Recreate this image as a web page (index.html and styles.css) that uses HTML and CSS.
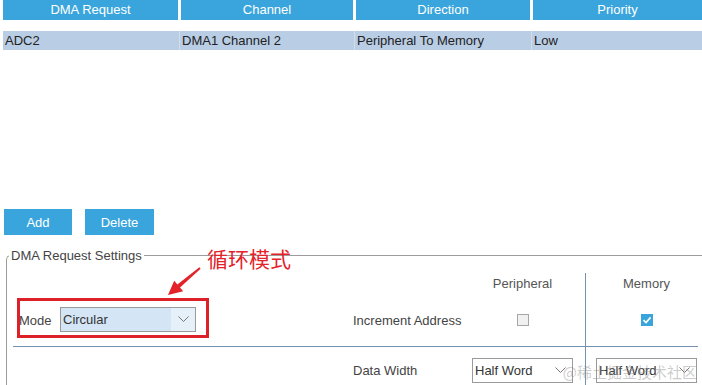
FILE: index.html
```html
<!DOCTYPE html>
<html lang="en">
<head>
    <meta charset="UTF-8">
    <title>DMA Settings</title>
    <link rel="stylesheet" href="styles.css">
</head>
<body>
    <div class="dma-table">
        <div class="dma-row head">
            <div>DMA Request</div>
            <div>Channel</div>
            <div>Direction</div>
            <div>Priority</div>
        </div>
        <div class="dma-row selected">
            <div>ADC2</div>
            <div>DMA1 Channel 2</div>
            <div>Peripheral To Memory</div>
            <div>Low</div>
        </div>
    </div>

    <div class="actions">
        <button class="btn btn-add">Add</button>
        <button class="btn btn-delete">Delete</button>
    </div>

    <fieldset class="settings">
        <legend>DMA Request Settings</legend>
        <div class="settings-grid">
            <div class="cell"></div>
            <div class="cell"></div>
            <div class="cell col-head">Peripheral</div>
            <div class="cell col-head mem">Memory</div>

            <div class="cell mode-cell line">
                <span class="mode-label">Mode</span>
                <div class="select mode-select">
                    <span>Circular</span>
                    <span class="select-btn">
                        <svg width="11" height="7" viewBox="0 0 11 7"><polyline points="0.5,0.5 5.5,5.5 10.5,0.5" fill="none" stroke="#777" stroke-width="1"/></svg>
                    </span>
                </div>
            </div>
            <div class="cell line nowrap">Increment Address</div>
            <div class="cell center line"><span class="check"></span></div>
            <div class="cell center line mem">
                <span class="check on">
                    <svg width="12" height="12" viewBox="0 0 12 12"><polyline points="2.5,6.2 5,8.6 9.6,3.4" fill="none" stroke="#fff" stroke-width="1.6"/></svg>
                </span>
            </div>

            <div class="cell"></div>
            <div class="cell nowrap">Data Width</div>
            <div class="cell center">
                <div class="select small">
                    <span>Half Word</span>
                    <svg width="11" height="7" viewBox="0 0 11 7"><polyline points="0.5,0.5 5.5,5.5 10.5,0.5" fill="none" stroke="#777" stroke-width="1"/></svg>
                </div>
            </div>
            <div class="cell center mem">
                <div class="select small">
                    <span>Half Word</span>
                    <svg width="11" height="7" viewBox="0 0 11 7"><polyline points="0.5,0.5 5.5,5.5 10.5,0.5" fill="none" stroke="#777" stroke-width="1"/></svg>
                </div>
            </div>
        </div>
    </fieldset>

    <!-- annotation drawn over the screenshot -->
    <div class="mark-box"></div>
    <svg class="mark-arrow" width="50" height="40" viewBox="0 0 50 40">
        <polygon points="40.6,6.8 20,25.5 23.2,29.3 8,33 14.2,18.7 17.4,22.5 39.4,5.2" fill="#e3222a"/>
    </svg>
    <div class="mark-text">循环模式</div>

    <div class="watermark">@稀土掘金技术社区</div>
</body>
</html>
```

FILE: styles.css
```css
body {
    font-family: "Liberation Sans", Arial, sans-serif;
    font-size: 13px;
    color: #222;
    background-color: #fff;
    margin: 0;
    width: 702px;
    height: 385px;
    overflow: hidden;
    position: relative;
}

.dma-table {
    height: 209px;
}

.dma-row {
    display: grid;
    grid-template-columns: 175px 172px 174px 1fr;
    column-gap: 3px;
    margin-left: 3px;
}

.dma-row.head div {
    background-color: #3aa5dc;
    color: #fff;
    text-align: center;
    height: 20px;
    line-height: 20px;
}

.dma-row.selected {
    margin-top: 11px;
    background-color: #b9cde5;
    height: 19px;
    line-height: 19px;
}

.dma-row.selected div {
    padding-left: 2px;
}

.dma-row.selected div + div {
    border-left: 1px solid #d3deeb;
    margin-left: -2px;
}

.actions {
    display: flex;
    gap: 13px;
    padding-left: 4px;
}

.btn {
    font-family: inherit;
    font-size: 13px;
    height: 26px;
    padding: 0;
    background-color: #3aa5dc;
    color: #fff;
    border: none;
    cursor: pointer;
}

.btn-add {
    width: 68px;
}

.btn-delete {
    width: 69px;
}

.settings {
    margin: 13px 0 0 6px;
    padding: 10px 0 0 0;
    border: 1px solid #9c9c9c;
    border-right: none;
    border-bottom: none;
    border-top-left-radius: 5px;
    min-width: 0;
}

.settings legend {
    padding: 0 2px;
    margin-left: 2px;
    line-height: 15px;
    color: #444;
}

.settings-grid {
    display: grid;
    grid-template-columns: 340px 107px 125px 113px;
    grid-template-rows: 21px 53px 46px;
    margin-left: 6px;
    color: #444;
}

.cell {
    display: flex;
    align-items: center;
}

.cell.nowrap {
    white-space: nowrap;
}

.cell.center {
    justify-content: center;
}

.col-head {
    justify-content: center;
    color: #555;
}

.cell.mem {
    border-left: 1px solid #7593b0;
    margin-right: -9px;
}

.cell.line {
    border-bottom: 1px solid #7593b0;
}

.cell.line.mem {
    margin-right: 0;
    padding-right: 9px;
    justify-content: flex-start;
    padding-left: 55px;
}

.mode-cell {
    padding-left: 6px;
}

.mode-label {
    width: 41px;
}

.select {
    display: flex;
    align-items: center;
    justify-content: space-between;
    box-sizing: border-box;
    border: 1px solid #9a9a9a;
    height: 25px;
    color: #333;
}

.mode-select {
    width: 136px;
    padding-left: 2px;
    background-color: #d4e5f5;
    margin-top: -2px;
}

.select-btn {
    display: flex;
    align-items: center;
    justify-content: center;
    width: 24px;
    height: 100%;
    background-color: #e6f0f9;
}

.select.small {
    width: 101px;
    padding: 0 6px 0 2px;
    background-color: #fff;
}

.check {
    display: block;
    box-sizing: border-box;
    width: 12px;
    height: 12px;
    border: 1px solid #a6a6a6;
    background-color: #f1f1f1;
    margin-top: -1px;
}

.check.on {
    border: none;
    background-color: #3aa5dc;
}

.check.on svg {
    display: block;
}

.mark-box {
    position: absolute;
    left: 17px;
    top: 298px;
    width: 192px;
    height: 40px;
    box-sizing: border-box;
    border: 3px solid #dc2129;
}

.mark-arrow {
    position: absolute;
    left: 160px;
    top: 262px;
}

.mark-text {
    position: absolute;
    left: 207px;
    top: 245px;
    font-family: "Noto Sans CJK SC", sans-serif;
    font-size: 21px;
    line-height: 26px;
    color: #e3222a;
}

.watermark {
    position: absolute;
    right: 5px;
    top: 360px;
    font-family: "Noto Sans CJK SC", sans-serif;
    font-size: 15px;
    line-height: 24px;
    color: rgba(140, 140, 140, 0.45);
    white-space: nowrap;
}
```
